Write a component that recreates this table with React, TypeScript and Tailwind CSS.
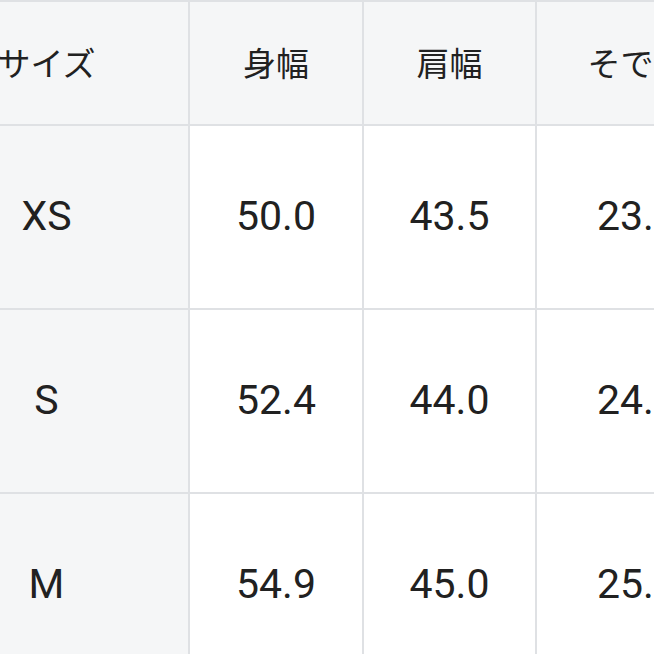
const headers = ["サイズ", "身幅", "肩幅", "そで丈"];

const rows = [
  ["XS", "50.0", "43.5", "23.5"],
  ["S", "52.4", "44.0", "24.0"],
  ["M", "54.9", "45.0", "25.0"],
];

export default function App() {
  return (
    <div className="h-[654px] w-[654px] overflow-hidden bg-white text-[#212121] [font-family:Roboto,'Noto_Sans_CJK_JP',sans-serif]">
      <div className="ml-[-97px] grid w-max grid-cols-[285px_174px_173px_202px]">
        {headers.map((h) => (
          <div
            key={h}
            className="flex h-[124px] items-center justify-center border-t-2 border-l-2 border-[#dfe1e4] bg-[#f5f6f7] text-[33px] [font-family:'Noto_Sans_CJK_JP',sans-serif]"
          >
            {h}
          </div>
        ))}
        {rows.map((r) =>
          r.map((v, i) => (
            <div
              key={r[0] + i}
              className={`flex h-[184px] items-center justify-center border-t-2 border-l-2 border-[#dfe1e4] text-[41px] ${
                i === 0 ? "bg-[#f5f6f7]" : "bg-white"
              }`}
            >
              {v}
            </div>
          ))
        )}
      </div>
    </div>
  );
}
